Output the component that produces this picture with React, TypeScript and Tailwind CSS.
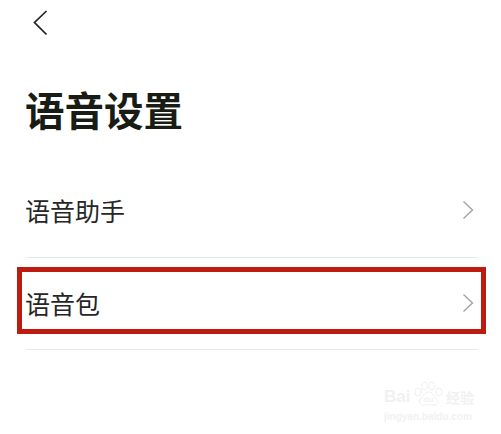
const cjk = "font-['Noto_Sans_CJK_SC','Noto_Sans_CJK_JP',sans-serif]";
const sans = "font-['Liberation_Sans',sans-serif]";

function Chevron() {
  return (
    <svg width="12" height="20" viewBox="0 0 12 20" fill="none" className="shrink-0">
      <path d="M1.500 1.500 L10.500 10 L1.500 18.500" stroke="#a3a3a3" strokeWidth="1.400" />
    </svg>
  );
}

// faint image-host stamp that sits over the page corner
function Watermark() {
  return (
    <div className="absolute right-[27px] bottom-[11px] w-[90px] flex flex-col text-[#f1f1f1] select-none">
      <div className="flex items-end justify-between">
        <span className={`text-[17px] leading-[20px] font-bold ${sans}`}>Bai</span>
        <svg width="29" height="26" viewBox="0 0 29 26" fill="none" stroke="currentColor" strokeWidth="1">
          <ellipse cx="4" cy="11" rx="3" ry="4" />
          <ellipse cx="10.500" cy="5" rx="3" ry="4" />
          <ellipse cx="18" cy="5" rx="3" ry="4" />
          <ellipse cx="25" cy="11" rx="3" ry="4" />
          <path d="M14.500 11 C10.500 11 9.500 15 6.500 18 C3.500 21 6.500 25 10.500 24 C12.500 23.500 16.500 23.500 18.500 24 C22.500 25 25.500 21 22.500 18 C19.500 15 18.500 11 14.500 11 Z" />
          <text x="14.500" y="21" textAnchor="middle" fontSize="8" fontWeight="700" fill="currentColor" stroke="none" fontFamily="Liberation Sans">du</text>
        </svg>
        <span className={`text-[14px] leading-[20px] font-bold ${cjk}`}>经验</span>
      </div>
      <span className={`mt-[3px] text-[10px] leading-[13px] font-bold whitespace-nowrap ${sans}`}>jingyan.baidu.com</span>
    </div>
  );
}

export default function App() {
  return (
    <div className={`relative w-[501px] h-[434px] overflow-hidden bg-white pl-[26px] pr-[23px] ${cjk}`}>
      <div className="pt-[10px] pl-[7px] h-[90px]">
        <svg width="15" height="26" viewBox="0 0 15 26" fill="none">
          <path d="M13.500 1 L1.500 12.500 L13.500 24.500" stroke="#1f1f1f" strokeWidth="1.700" />
        </svg>
      </div>
      <h1 className="h-[38px] -ml-px text-[39.500px] leading-[38px] font-bold text-[#181c14] whitespace-nowrap">语音设置</h1>

      <div className="mt-[68px] pb-[33px] pr-[4px] flex items-center justify-between border-b border-[#e8e8e8]">
        <span className="-ml-px text-[25px] leading-[28px] text-[#262626]">语音助手</span>
        <Chevron />
      </div>

      <div className="mt-[9px] -ml-[9px] -mr-[8px] h-[67px] pt-[4px] pl-[3px] pr-[7px] flex items-center justify-between border-[5px] border-[#bd1a10]">
        <span className="text-[25px] leading-[28px] text-[#262626]">语音包</span>
        <Chevron />
      </div>

      <div className="mt-[15px] h-px bg-[#e8e8e8]" />
      <Watermark />
    </div>
  );
}
